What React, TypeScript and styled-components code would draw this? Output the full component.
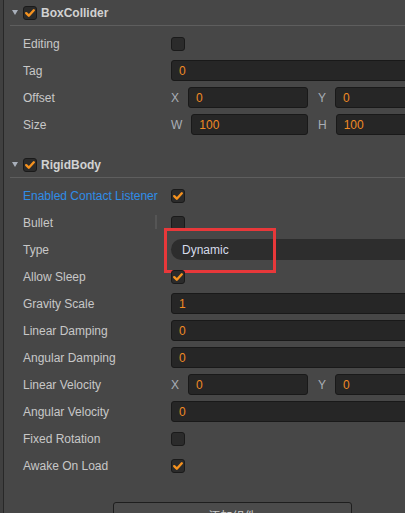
import React from "react";
import styled, { createGlobalStyle } from "styled-components";

const GlobalStyle = createGlobalStyle`
  html, body { margin: 0; padding: 0; background: #474747; overflow: hidden; }
  body { font-family: "Liberation Sans", Arial, sans-serif; font-size: 12px; color: #c8c8c8; }
  * { box-sizing: border-box; }
`;

const Page = styled.div`
  display: flex;
  min-height: 100vh;
  width: 470px;
`;

const Gutter = styled.div`
  width: 4px;
  flex: none;
  background: #404040;
  border-right: 1px solid #282828;
`;

const Panel = styled.div`
  width: 457px;
  flex: none;
  display: flex;
  flex-direction: column;
`;

const Section = styled.section`
  display: flex;
  flex-direction: column;
`;

const Header = styled.div`
  display: flex;
  align-items: center;
  height: 26px;
  margin-left: 6px;
  padding-left: 2px;
  border-bottom: 1px solid #5e5e5e;
`;

const Arrow = styled.span`
  width: 0;
  height: 0;
  border-left: 3px solid transparent;
  border-right: 3px solid transparent;
  border-top: 5px solid #a9b0bb;
  margin: 0 5px 0 0;
`;

const Title = styled.span`
  font-weight: bold;
  font-size: 12px;
  color: #d2d2d2;
  margin-left: 4px;
`;

const Rows = styled.div`
  display: flex;
  flex-direction: column;
  padding: 4px 0 14px;
`;

const Row = styled.div`
  position: relative;
  display: flex;
  align-items: center;
  height: 27px;
  padding-left: 19px;
`;

const Label = styled.span<{ $accent?: boolean }>`
  width: 148px;
  flex: none;
  color: ${(p) => (p.$accent ? "#2f8de8" : "#c8c8c8")};
  white-space: nowrap;
`;

const Value = styled.div`
  width: 284px;
  flex: none;
  display: flex;
  align-items: center;
  gap: 10px;
`;

const Pair = styled.div`
  flex: 1;
  display: flex;
  align-items: center;
  min-width: 0;
`;

const Axis = styled.span`
  color: #a9aeb6;
  margin-right: 9px;
`;

const Input = styled.div`
  flex: 1;
  height: 21px;
  display: flex;
  align-items: center;
  padding-left: 7px;
  background: #262626;
  border: 1px solid #191919;
  border-radius: 3px;
  color: #f08a24;
  min-width: 0;
`;

const Select = styled.div`
  flex: 1;
  height: 21px;
  display: flex;
  align-items: center;
  padding-left: 11px;
  background: #2d2d2d;
  border-radius: 11px 0 0 11px;
  color: #d6dbea;
`;

const Box = styled.span`
  width: 14px;
  height: 14px;
  flex: none;
  display: inline-flex;
  align-items: center;
  justify-content: center;
  background: #2b2b2b;
  border: 1px solid #1a1a1a;
  border-radius: 3px;
`;

const Splitter = styled.span`
  position: absolute;
  left: 151px;
  top: 6px;
  width: 2px;
  height: 14px;
  background: #555555;
`;

const Annotation = styled.span`
  position: absolute;
  left: 160px;
  top: -8px;
  width: 112px;
  height: 45px;
  border: 3px solid #e8383a;
  pointer-events: none;
`;

const Footer = styled.div`
  display: flex;
  justify-content: center;
  padding-top: 9px;
`;

const AddButton = styled.button`
  width: 239px;
  height: 26px;
  background: #4b4b4b;
  border: 1px solid #1e1e1e;
  border-radius: 3px;
  color: #cccccc;
  font-family: "Liberation Sans", "Noto Sans CJK SC", sans-serif;
  font-size: 12px;
  padding: 0;
`;

const Check: React.FC<{ checked?: boolean }> = ({ checked }) => (
  <Box>
    {checked && (
      <svg width="12" height="12" viewBox="0 0 12 12">
        <path d="M2.2 6.2 L4.8 8.7 L9.8 3.3" fill="none" stroke="#f5921f" strokeWidth="2.4" strokeLinecap="round" strokeLinejoin="round" />
      </svg>
    )}
  </Box>
);

const SectionHeader: React.FC<{ title: string }> = ({ title }) => (
  <Header>
    <Arrow />
    <Check checked />
    <Title>{title}</Title>
  </Header>
);

export default function App() {
  return (
    <>
      <GlobalStyle />
      <Page>
        <Gutter />
        <Panel>
          <Section>
            <SectionHeader title="BoxCollider" />
            <Rows>
              <Row>
                <Label>Editing</Label>
                <Value><Check /></Value>
              </Row>
              <Row>
                <Label>Tag</Label>
                <Value><Input>0</Input></Value>
              </Row>
              <Row>
                <Label>Offset</Label>
                <Value>
                  <Pair><Axis>X</Axis><Input>0</Input></Pair>
                  <Pair><Axis>Y</Axis><Input>0</Input></Pair>
                </Value>
              </Row>
              <Row>
                <Label>Size</Label>
                <Value>
                  <Pair><Axis>W</Axis><Input>100</Input></Pair>
                  <Pair><Axis>H</Axis><Input>100</Input></Pair>
                </Value>
              </Row>
            </Rows>
          </Section>
          <Section>
            <SectionHeader title="RigidBody" />
            <Rows>
              <Row>
                <Label $accent>Enabled Contact Listener</Label>
                <Value><Check checked /></Value>
              </Row>
              <Row>
                <Label>Bullet</Label>
                <Splitter />
                <Value><Check /></Value>
              </Row>
              <Row>
                <Label>Type</Label>
                <Value><Select>Dynamic</Select></Value>
                <Annotation />
              </Row>
              <Row>
                <Label>Allow Sleep</Label>
                <Value><Check checked /></Value>
              </Row>
              <Row>
                <Label>Gravity Scale</Label>
                <Value><Input>1</Input></Value>
              </Row>
              <Row>
                <Label>Linear Damping</Label>
                <Value><Input>0</Input></Value>
              </Row>
              <Row>
                <Label>Angular Damping</Label>
                <Value><Input>0</Input></Value>
              </Row>
              <Row>
                <Label>Linear Velocity</Label>
                <Value>
                  <Pair><Axis>X</Axis><Input>0</Input></Pair>
                  <Pair><Axis>Y</Axis><Input>0</Input></Pair>
                </Value>
              </Row>
              <Row>
                <Label>Angular Velocity</Label>
                <Value><Input>0</Input></Value>
              </Row>
              <Row>
                <Label>Fixed Rotation</Label>
                <Value><Check /></Value>
              </Row>
              <Row>
                <Label>Awake On Load</Label>
                <Value><Check checked /></Value>
              </Row>
            </Rows>
          </Section>
          <Footer>
            <AddButton>添加组件</AddButton>
          </Footer>
        </Panel>
      </Page>
    </>
  );
}
